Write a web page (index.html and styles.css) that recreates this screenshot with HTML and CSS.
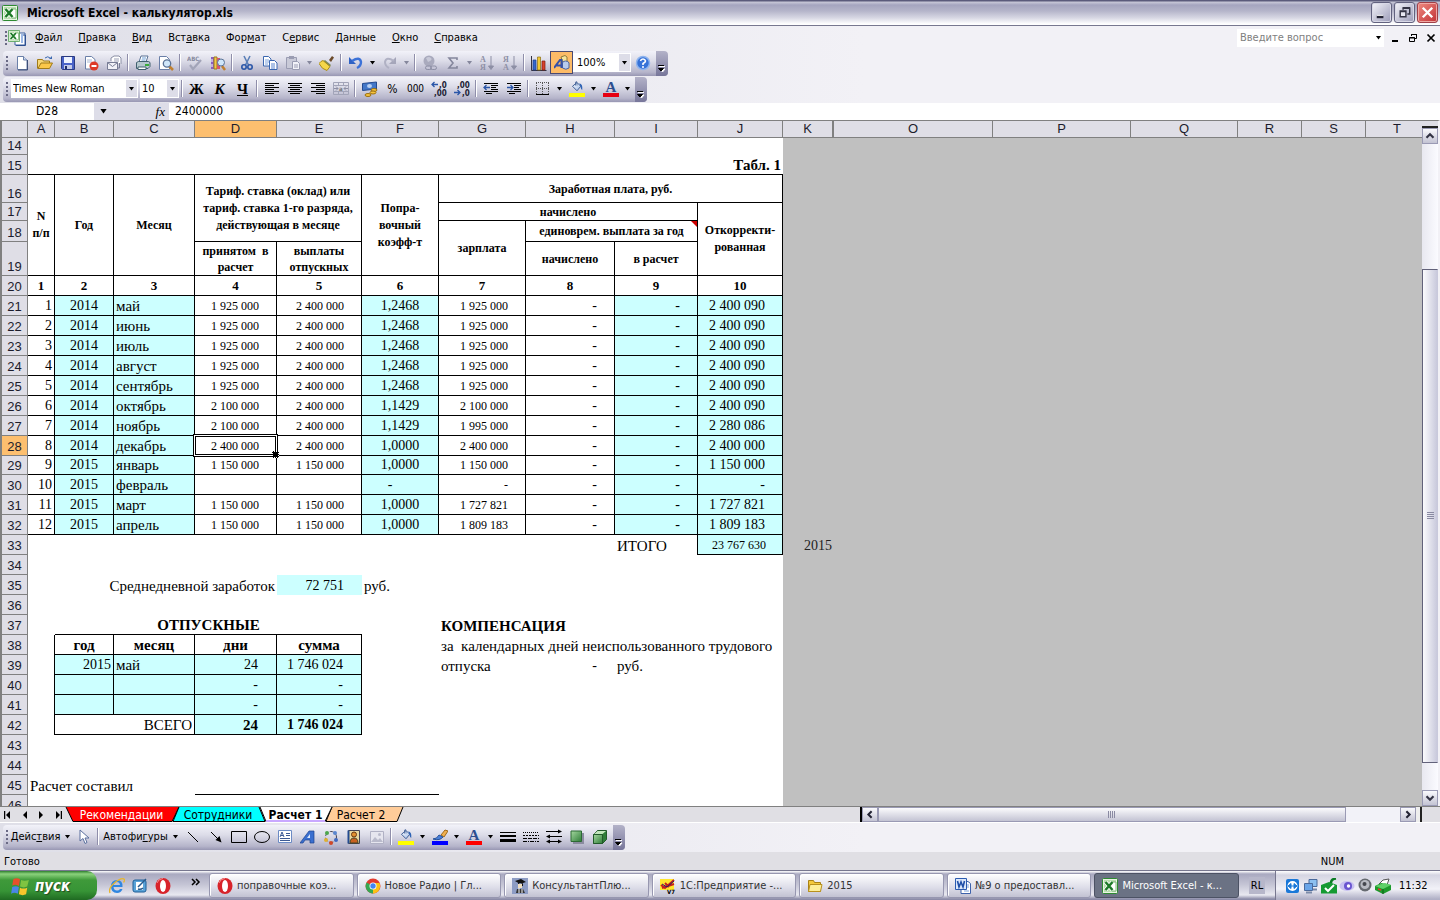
FILE: index.html
```html
<!DOCTYPE html>
<html lang="ru">
<head>
<meta charset="utf-8">
<title>Microsoft Excel - калькулятор.xls</title>
<link rel="stylesheet" href="styles.css">
</head>
<body>
<svg class="defs" aria-hidden="true">
  <defs>
    <linearGradient id="gGreen" x1="0" y1="0" x2="1" y2="1"><stop offset="0" stop-color="#a5d8a0"/><stop offset="1" stop-color="#2f7d38"/></linearGradient>
    <linearGradient id="gBlue" x1="0" y1="0" x2="1" y2="1"><stop offset="0" stop-color="#ffffff"/><stop offset="1" stop-color="#9db9e6"/></linearGradient>
  </defs>
  <symbol id="excel" viewBox="0 0 16 16"><rect x=".5" y=".5" width="15" height="15" rx="1" fill="#e9f5e4" stroke="#2e8b32"/><path d="M2 2h12v12H2z" fill="#b9dfb0"/><path d="M10 4h4v9h-4" fill="#fff" stroke="#7fb77a"/><path d="M3.500 4l7 8M10.500 4l-7 8" stroke="#fff" stroke-width="4"/><path d="M3.500 4l7 8M10.500 4l-7 8" stroke="#1d7a28" stroke-width="2.500"/></symbol>
  <symbol id="down" viewBox="0 0 7 4"><path d="M1 0h5L3.500 3.500z" fill="currentColor"/></symbol>
  <symbol id="bucket" viewBox="0 0 16 16"><path d="M2 7l6-5 5 5-5 6z" fill="url(#gBlue)" stroke="#3c5c94" stroke-width="1.300"/><path d="M6 6V1.500q2-2 2 1V6" fill="none" stroke="#3c5c94"/><path d="M11 3q5 1 4 9q-2-1-2.500-5z" fill="#2d62b5"/></symbol>
  <symbol id="opera" viewBox="0 0 16 16"><ellipse cx="8" cy="8" rx="7.500" ry="8" fill="#d8232a"/><ellipse cx="8" cy="8" rx="3" ry="6" fill="#fff"/><path d="M2 5q1-4 6-4.500" stroke="#f58a8a" fill="none"/></symbol>
  <symbol id="more" viewBox="0 0 8 9"><path d="M1 1.500h6M2 4h5L4.500 7z" stroke="#fff" fill="#fff"/><path d="M0 .5h6M.5 3.500h5L3 6z" stroke="#000" fill="#000" stroke-width="1"/></symbol>
</svg>

<header class="titlebar">
  <svg class="i16"><use href="#excel"/></svg>
  <h1>Microsoft Excel - калькулятор.xls</h1>
  <div class="winbtns">
    <button class="wb" aria-label="Свернуть"><svg viewBox="0 0 20 20"><path d="M5 14.500h7" stroke="#223" stroke-width="3"/><path d="M5 13h7" stroke="#fff"/></svg></button>
    <button class="wb" aria-label="Развернуть"><svg viewBox="0 0 20 20"><path d="M8.500 7V5.500h7v6H13M8 5h8" fill="none" stroke="#334" stroke-width="1.500"/><path d="M5.500 8.500h6v6h-6zM5 9h7" fill="#e8e8f2" stroke="#334" stroke-width="1.500"/></svg></button>
    <button class="wb close" aria-label="Закрыть"><svg viewBox="0 0 20 20"><path d="M5 5l10 10M15 5L5 15" stroke="#fff" stroke-width="2.500"/></svg></button>
  </div>
</header>

<div class="chrome">
<nav class="menubar">
  <span class="grip"></span>
  <svg class="i18" viewBox="0 0 18 16"><path d="M7 3h10v12H7z" fill="#fff" stroke="#3a5f9f"/><path d="M15 5h2.500v10.500H8" fill="none" stroke="#2d4f90"/><path d="M14 4v9" stroke="#9db9e6" stroke-width="2"/><svg width="12" height="12"><use href="#excel"/></svg></svg>
  <button><u>Ф</u>айл</button><button><u>П</u>равка</button><button><u>В</u>ид</button><button>Вст<u>а</u>вка</button><button>Фор<u>м</u>ат</button><button>С<u>е</u>рвис</button><button><u>Д</u>анные</button><button><u>О</u>кно</button><button><u>С</u>правка</button>
  <div class="ask"><input aria-label="Введите вопрос" placeholder="Введите вопрос"><svg class="dn"><use href="#down"/></svg></div>
  <div class="docbtns">
    <button aria-label="Свернуть книгу"><svg viewBox="0 0 10 10"><path d="M2 8h6" stroke="#000" stroke-width="2"/></svg></button>
    <button aria-label="Восстановить книгу"><svg viewBox="0 0 10 10"><path d="M3.500 3V1.500h5v4H7M3 1.500h6M1.500 4.500h5v4h-5zM1 5h6" fill="none" stroke="#000"/></svg></button>
    <button aria-label="Закрыть книгу"><svg viewBox="0 0 10 10"><path d="M1.500 1.500l7 7M8.500 1.500l-7 7" stroke="#000" stroke-width="1.700"/></svg></button>
  </div>
</nav>

<div class="toolbar" role="toolbar" aria-label="Стандартная">
  <span class="grip"></span>
  <button aria-label="Создать"><svg viewBox="0 0 16 16"><path d="M3.500 1.500h6l3.500 3.500v9.500H3.500z" fill="#fff" stroke="#6a7fa8"/><path d="M9.500 1.500V5H13" fill="#cfdcf2" stroke="#6a7fa8"/><path d="M13.500 5v10H4" stroke="#3d4f78" fill="none"/></svg></button>
  <button aria-label="Открыть"><svg viewBox="0 0 16 16"><path d="M.5 13.500v-9h5l1 1.500h6v2" fill="#f7d774" stroke="#a07a18"/><path d="M1 13.500L4 8h11.500l-3 5.500z" fill="#fbc84a" stroke="#a07a18"/><path d="M8 3q3-2.500 5 0" fill="none" stroke="#3a68b0"/><path d="M12 4h3V1z" fill="#3a68b0"/></svg></button>
  <button aria-label="Сохранить"><svg viewBox="0 0 16 16"><path d="M1.500 1.500h13v13h-12l-1-1z" fill="#4a63c8" stroke="#2a3a80"/><path d="M4 2h8v6H4z" fill="#eef3ff"/><path d="M4 10h8v4H4z" fill="#c5cce8"/><path d="M5 11h2v3H5z" fill="#1f2d6b"/></svg></button>
  <button aria-label="Разрешения"><svg viewBox="0 0 16 16"><path d="M2.500 1.500h6l3.500 3v9.500H2.500z" fill="#fff" stroke="#6a7fa8"/><path d="M4 5h5M4 7h5" stroke="#aab8d4"/><circle cx="11" cy="11" r="4.500" fill="#dd3a28"/><path d="M8.500 11h5" stroke="#fff" stroke-width="2"/></svg></button>
  <button aria-label="Сообщение"><svg viewBox="0 0 16 16"><path d="M5 6V3l3-2h5l2 2v6" fill="#fff" stroke="#8b8fa5"/><path d="M8 4h5M8 6h5" stroke="#9b9fb5"/><path d="M1.500 7.500h10v7h-10z" fill="#f2f2f8" stroke="#777c95"/><path d="M1.500 7.500l5 4 5-4M13.500 8v5h-2" fill="none" stroke="#777c95"/></svg></button>
  <span class="sep"></span>
  <button aria-label="Печать"><svg viewBox="0 0 16 16"><path d="M4 7l2-6h7l-2 6" fill="#fff" stroke="#5a7296"/><path d="M1.500 7.500l2-1h10l1.500 1v4l-2 2H1.500z" fill="#b6c9cf" stroke="#40606e"/><path d="M3 12h8v2.500H3z" fill="#fff" stroke="#40606e"/><path d="M10 10h4" stroke="#3aad3a" stroke-width="2"/><path d="M7 3h4M6.500 5h4" stroke="#6d9fd8"/></svg></button>
  <button aria-label="Просмотр"><svg viewBox="0 0 16 16"><path d="M1.500 1.500h7l3 3v10h-10z" fill="#fff" stroke="#6a7fa8"/><path d="M11 11l4 4" stroke="#c08030" stroke-width="2.500"/><circle cx="9" cy="8.500" r="3.700" fill="#cfe6fa" stroke="#5a7296" stroke-width="1.300"/></svg></button>
  <span class="sep"></span>
  <button aria-label="Орфография"><svg viewBox="0 0 16 16"><text x="0" y="6" class="tiny" fill="#888ba0">ABC</text><path d="M3 10l3 4 8-9" fill="none" stroke="#a2a4b8" stroke-width="2.200"/></svg></button>
  <button aria-label="Справочные материалы"><svg viewBox="0 0 16 16"><path d="M1 2h3v12H1z" fill="#8a5fc0"/><path d="M4 2h3v12H4z" fill="#f1c94a" stroke="#9b7a20"/><path d="M7 3h3v11H7z" fill="#d8576a"/><path d="M2 4v3M2 9v3" stroke="#fff"/><path d="M12 11l3 4" stroke="#c08030" stroke-width="2.500"/><circle cx="11" cy="7.500" r="3.500" fill="#cfe6fa" stroke="#5a7296"/></svg></button>
  <span class="sep"></span>
  <button aria-label="Вырезать"><svg viewBox="0 0 16 16"><path d="M5 1l4.500 9M11 1L6.500 10" stroke="#5b7fb8" stroke-width="1.600"/><circle cx="5" cy="12" r="2.200" fill="none" stroke="#2a56a8" stroke-width="1.600"/><circle cx="11" cy="12" r="2.200" fill="none" stroke="#2a56a8" stroke-width="1.600"/></svg></button>
  <button aria-label="Копировать"><svg viewBox="0 0 16 16"><path d="M1.500 1.500h5l2.500 2.500v7H1.500z" fill="#fff" stroke="#3b67b0"/><path d="M3 5h4M3 7h4M3 9h3" stroke="#7fa3dc"/><path d="M7.500 5.500h5L15 8v6.500H7.500z" fill="#fff" stroke="#3b67b0"/><path d="M9 9h4M9 11h4M9 13h4" stroke="#5a86cf"/></svg></button>
  <button aria-label="Вставить"><svg viewBox="0 0 16 16"><path d="M1.500 2.500h10v11h-10z" fill="#c9cad8" stroke="#9a9cb2"/><path d="M4 1h5v3H4z" fill="#9a9cb2"/><path d="M7.500 6.500h5l2 2v6h-7z" fill="#f2f2f8" stroke="#9a9cb2"/><path d="M9 10h4M9 12h4" stroke="#9a9cb2"/></svg></button>
  <button class="arr off" aria-label="Параметры вставки"><svg class="dn"><use href="#down"/></svg></button>
  <button aria-label="Формат по образцу"><svg viewBox="0 0 16 16"><path d="M10 5l3-4 2 1.500L12 7z" fill="#6b4a2a"/><path d="M6 5l6 5-1.500 2-7-5z" fill="#7c8a58"/><path d="M2 6.500l2-1 7 6-3 4q-5-1-8-7z" fill="#f4d64a" stroke="#a98b1c"/></svg></button>
  <span class="sep"></span>
  <button aria-label="Отменить"><svg viewBox="0 0 16 16"><path d="M1 2v7h7z" fill="#2f62c4"/><path d="M4 6q8-5 9 1q0 4-4 6" fill="none" stroke="#3c72d8" stroke-width="2.400"/></svg></button>
  <button class="arr" aria-label="Список отмены"><svg class="dn"><use href="#down"/></svg></button>
  <button aria-label="Вернуть"><svg viewBox="0 0 16 16"><path d="M14 2v7H7z" fill="#a5a6ba"/><path d="M12 6Q4 1 3 7q0 4 4 6" fill="none" stroke="#b0b1c4" stroke-width="2"/></svg></button>
  <button class="arr off" aria-label="Список возврата"><svg class="dn"><use href="#down"/></svg></button>
  <span class="sep"></span>
  <button aria-label="Гиперссылка"><svg viewBox="0 0 16 16"><circle cx="7" cy="6" r="5.500" fill="#a9aabd"/><path d="M4 3q3-2 5 0t-3 4" fill="#c8c9d8"/><rect x="3.500" y="11" width="6" height="3.500" rx="1.700" fill="none" stroke="#8d8fa5"/><rect x="8.500" y="11" width="6" height="3.500" rx="1.700" fill="none" stroke="#8d8fa5"/></svg></button>
  <button aria-label="Автосумма"><svg viewBox="0 0 16 16"><path d="M12 5V3H4l4 5-4 5h8v-2" fill="none" stroke="#84869c" stroke-width="1.600"/></svg></button>
  <button class="arr off" aria-label="Функции"><svg class="dn"><use href="#down"/></svg></button>
  <button aria-label="По возрастанию"><svg viewBox="0 0 16 16"><text x="1" y="7" class="az">А</text><text x="1" y="15" class="az">Я</text><path d="M12 1v11M9.500 11h5L12 14.500z" stroke="#8d8fa5" fill="#8d8fa5"/></svg></button>
  <button aria-label="По убыванию"><svg viewBox="0 0 16 16"><text x="1" y="7" class="az">Я</text><text x="1" y="15" class="az">А</text><path d="M12 1v11M9.500 11h5L12 14.500z" stroke="#8d8fa5" fill="#8d8fa5"/></svg></button>
  <span class="sep"></span>
  <button aria-label="Диаграмма"><svg viewBox="0 0 16 16"><path d="M.5 1v14.500h15" stroke="#334" fill="none"/><path d="M2 5h3v10H2z" fill="#3366cc" stroke="#1f3f86" stroke-width=".7"/><path d="M6.500 2h3v13h-3z" fill="#f3c934" stroke="#8a6d10" stroke-width=".7"/><path d="M11 6h3v9h-3z" fill="#d8402c" stroke="#7d1c10" stroke-width=".7"/></svg></button>
  <button class="on" aria-label="Рисование" aria-pressed="true"><svg viewBox="0 0 16 16"><path d="M7 2l4-1.500L13 2v5l-4 1z" fill="#f7e39a" stroke="#8f7b3a"/><path d="M8.500 8q0-2 3-2t3.500 2v5q-3 2.500-6.500 0z" fill="#b9cbee" stroke="#4b62a0"/><path d="M0 13L6 5h1.500v8M2 10.500h5" fill="none" stroke="#3550a8" stroke-width="2"/></svg></button>
  <div class="combo zoom"><select aria-label="Масштаб"><option>100%</option></select><svg class="dn"><use href="#down"/></svg></div>
  <button aria-label="Справка"><svg viewBox="0 0 16 16"><circle cx="8" cy="8" r="6.500" fill="#3672d8" stroke="#8fb4ee" stroke-width="1.500"/><path d="M5.500 6q.5-2 2.500-2t2.500 2q0 1.300-2.500 2.500V10" fill="none" stroke="#fff" stroke-width="1.600"/><circle cx="8" cy="12" r="1" fill="#fff"/></svg></button>
  <button class="end" aria-label="Параметры панелей"><svg viewBox="0 0 8 9"><use href="#more"/></svg></button>
</div>

<div class="toolbar" role="toolbar" aria-label="Форматирование">
  <span class="grip"></span>
  <div class="combo font"><select aria-label="Шрифт"><option>Times New Roman</option></select><svg class="dn"><use href="#down"/></svg></div>
  <div class="combo size"><select aria-label="Размер"><option>10</option></select><svg class="dn"><use href="#down"/></svg></div>
  <span class="sep"></span>
  <button class="ch">Ж</button><button class="ch it">К</button><button class="ch"><u>Ч</u></button>
  <span class="sep"></span>
  <button aria-label="По левому краю"><svg viewBox="0 0 16 16"><path d="M1 2.500h14M1 4.500h9M1 6.500h14M1 8.500h9M1 10.500h14M1 12.500h9" stroke="#000"/></svg></button>
  <button aria-label="По центру"><svg viewBox="0 0 16 16"><path d="M1 2.500h14M3 4.500h10M1 6.500h14M3 8.500h10M1 10.500h14M3 12.500h10" stroke="#000"/></svg></button>
  <button aria-label="По правому краю"><svg viewBox="0 0 16 16"><path d="M1 2.500h14M6 4.500h9M1 6.500h14M6 8.500h9M1 10.500h14M6 12.500h9" stroke="#000"/></svg></button>
  <button aria-label="Объединить"><svg viewBox="0 0 16 16"><path d="M.5 1.500h15v12H.5zM.5 4.500h15M.5 10.500h15M5.500 1.500v3M10.500 1.500v3M5.500 10.500v3M10.500 10.500v3" fill="none" stroke="#a2a4b8"/><path d="M1 7.500h4M3 5.500l2 2-2 2M15 7.500h-4M13 5.500l-2 2 2 2" fill="none" stroke="#8d8fa5"/><text x="6" y="10" class="tiny" fill="#777">a</text></svg></button>
  <span class="sep"></span>
  <button aria-label="Денежный формат"><svg viewBox="0 0 16 16"><path d="M.5 2.500l14-1.500v7l-14 1.500z" fill="#4377c8" stroke="#234a90"/><ellipse cx="7.500" cy="5" rx="2.500" ry="2" fill="#b8d0f2"/><ellipse cx="12" cy="9" rx="3" ry="1.500" fill="#f6c33c" stroke="#9b7010"/><ellipse cx="11" cy="11.500" rx="3" ry="1.500" fill="#f6c33c" stroke="#9b7010"/><ellipse cx="6" cy="14" rx="3" ry="1.500" fill="#f6c33c" stroke="#9b7010"/></svg></button>
  <button class="pc">%</button><button class="pc zeros">000</button>
  <button aria-label="Увеличить разрядность"><svg viewBox="0 0 16 16"><path d="M1 3.500h6M3.500 1L1 3.500 3.500 6" fill="none" stroke="#2a56a8" stroke-width="1.300"/><text x="8" y="7" class="dig">,0</text><text x="3" y="15" class="dig">,00</text></svg></button>
  <button aria-label="Уменьшить разрядность"><svg viewBox="0 0 16 16"><path d="M0 11.500h6M3.500 9L6 11.500 3.500 14" fill="none" stroke="#2a56a8" stroke-width="1.300"/><text x="3" y="7" class="dig">,00</text><text x="8" y="15" class="dig">,0</text></svg></button>
  <span class="sep"></span>
  <button aria-label="Уменьшить отступ"><svg viewBox="0 0 16 16"><path d="M1 2.500h14M8 4.500h7M8 6.500h5M8 8.500h7M1 10.500h14M3 12.500h6" stroke="#000"/><path d="M1 6.500h6M3.500 4L1 6.500 3.500 9" fill="none" stroke="#2a56a8" stroke-width="1.300"/></svg></button>
  <button aria-label="Увеличить отступ"><svg viewBox="0 0 16 16"><path d="M1 2.500h14M8 4.500h7M8 6.500h5M8 8.500h7M1 10.500h14M3 12.500h6" stroke="#000"/><path d="M1 6.500h6M4.500 4L7 6.500 4.500 9" fill="none" stroke="#2a56a8" stroke-width="1.300"/></svg></button>
  <span class="sep"></span>
  <button aria-label="Границы"><svg viewBox="0 0 16 16"><path d="M1.500 2v11M7.500 2v11M13.500 2v11M1 1.500h13M1 7.500h13" stroke="#555" stroke-dasharray="1 1"/><path d="M1 13.500h13" stroke="#000"/></svg></button>
  <button class="arr" aria-label="Виды границ"><svg class="dn"><use href="#down"/></svg></button>
  <button aria-label="Цвет заливки"><svg viewBox="0 0 16 16"><svg width="16" height="12"><use href="#bucket"/></svg><path d="M0 12h16v4H0z" fill="#ffff00"/></svg></button>
  <button class="arr" aria-label="Цвета заливки"><svg class="dn"><use href="#down"/></svg></button>
  <button aria-label="Цвет шрифта"><svg viewBox="0 0 16 16"><text x="8" y="11" class="bigA">A</text><path d="M0 12h16v4H0z" fill="#e60012"/></svg></button>
  <button class="arr" aria-label="Цвета шрифта"><svg class="dn"><use href="#down"/></svg></button>
  <button class="end" aria-label="Параметры панелей"><svg viewBox="0 0 8 9"><use href="#more"/></svg></button>
</div>

<div class="formula">
  <input class="namebox" aria-label="Имя" value="D28">
  <button class="namearr" aria-label="Список имён"><svg viewBox="0 0 7 4"><use href="#down"/></svg></button>
  <button class="fx" aria-label="Вставка функции"><i>fx</i></button>
  <input class="fval" aria-label="Строка формул" value="2400000">
</div>
</div>

<main class="sheetwrap">
<div class="sheet">
<table>
<colgroup><col class="w28"><col class="w27"><col class="w59"><col class="w81"><col class="w82"><col class="w85"><col class="w77"><col class="w87"><col class="w89"><col class="w83"><col class="w85"><col class="w51"><col class="w159"><col class="w138"><col class="w107"><col class="w64"><col class="w64"><col></colgroup>
<thead><tr class="hd"><th></th><th>A</th><th>B</th><th>C</th><th class="sel">D</th><th>E</th><th>F</th><th>G</th><th>H</th><th>I</th><th>J</th><th class="frz">K</th><th>O</th><th>P</th><th>Q</th><th>R</th><th>S</th><th class="last">T</th></tr></thead>
<tbody>
<tr class="h17"><th>14</th><td colspan="10"></td><td class="gray" colspan="7"></td></tr>
<tr><th>15</th><td colspan="10" class="bb r bold p2">Табл. 1</td><td class="gray" colspan="7"></td></tr>
<tr class="h28 hh"><th>16</th><td class="b" rowspan="4">N<br>п/п</td><td class="b" rowspan="4">Год</td><td class="b" rowspan="4">Месяц</td><td class="b" rowspan="3" colspan="2">Тариф. ставка (оклад) или<br>тариф. ставка 1-го разряда,<br>действующая в месяце</td><td class="b" rowspan="4">Попра-<br>вочный<br>коэфф-т</td><td class="b" colspan="4">Заработная плата, руб.</td><td class="gray" colspan="7"></td></tr>
<tr class="h18 hh"><th>17</th><td class="b" colspan="3">начислено</td><td class="b" rowspan="3">Откорректи-<br>рованная</td><td class="gray" colspan="7"></td></tr>
<tr class="h21 hh"><th>18</th><td class="b" rowspan="2">зарплата</td><td class="b note" colspan="2">единоврем. выплата за год</td><td class="gray" colspan="7"></td></tr>
<tr class="h34 hh"><th>19</th><td class="b">принятом&nbsp; в<br>расчет</td><td class="b">выплаты<br>отпускных</td><td class="b">начислено</td><td class="b">в расчет</td><td class="gray" colspan="7"></td></tr>
<tr class="hh nums"><th>20</th><td class="b">1</td><td class="b">2</td><td class="b">3</td><td class="b">4</td><td class="b">5</td><td class="b">6</td><td class="b">7</td><td class="b">8</td><td class="b">9</td><td class="b">10</td><td class="gray" colspan="7"></td></tr>
<tr class="d"><th>21</th><td>1</td><td>2014</td><td>май</td><td>1 925 000</td><td>2 400 000</td><td>1,2468</td><td>1 925 000</td><td>-</td><td>-</td><td>2 400 090</td><td class="gray" colspan="7"></td></tr>
<tr class="d"><th>22</th><td>2</td><td>2014</td><td>июнь</td><td>1 925 000</td><td>2 400 000</td><td>1,2468</td><td>1 925 000</td><td>-</td><td>-</td><td>2 400 090</td><td class="gray" colspan="7"></td></tr>
<tr class="d"><th>23</th><td>3</td><td>2014</td><td>июль</td><td>1 925 000</td><td>2 400 000</td><td>1,2468</td><td>1 925 000</td><td>-</td><td>-</td><td>2 400 090</td><td class="gray" colspan="7"></td></tr>
<tr class="d"><th>24</th><td>4</td><td>2014</td><td>август</td><td>1 925 000</td><td>2 400 000</td><td>1,2468</td><td>1 925 000</td><td>-</td><td>-</td><td>2 400 090</td><td class="gray" colspan="7"></td></tr>
<tr class="d"><th>25</th><td>5</td><td>2014</td><td>сентябрь</td><td>1 925 000</td><td>2 400 000</td><td>1,2468</td><td>1 925 000</td><td>-</td><td>-</td><td>2 400 090</td><td class="gray" colspan="7"></td></tr>
<tr class="d"><th>26</th><td>6</td><td>2014</td><td>октябрь</td><td>2 100 000</td><td>2 400 000</td><td>1,1429</td><td>2 100 000</td><td>-</td><td>-</td><td>2 400 090</td><td class="gray" colspan="7"></td></tr>
<tr class="d"><th>27</th><td>7</td><td>2014</td><td>ноябрь</td><td>2 100 000</td><td>2 400 000</td><td>1,1429</td><td>1 995 000</td><td>-</td><td>-</td><td>2 280 086</td><td class="gray" colspan="7"></td></tr>
<tr class="d"><th class="sel">28</th><td>8</td><td>2014</td><td>декабрь</td><td class="cell">2 400 000</td><td>2 400 000</td><td>1,0000</td><td>2 400 000</td><td>-</td><td>-</td><td>2 400 000</td><td class="gray" colspan="7"></td></tr>
<tr class="d h19"><th>29</th><td>9</td><td>2015</td><td>январь</td><td>1 150 000</td><td>1 150 000</td><td>1,0000</td><td>1 150 000</td><td>-</td><td>-</td><td>1 150 000</td><td class="gray" colspan="7"></td></tr>
<tr class="d"><th>30</th><td>10</td><td>2015</td><td>февраль</td><td></td><td></td><td class="dash">-</td><td>-</td><td>-</td><td>-</td><td>-</td><td class="gray" colspan="7"></td></tr>
<tr class="d"><th>31</th><td>11</td><td>2015</td><td>март</td><td>1 150 000</td><td>1 150 000</td><td>1,0000</td><td>1 727 821</td><td>-</td><td>-</td><td>1 727 821</td><td class="gray" colspan="7"></td></tr>
<tr class="d"><th>32</th><td>12</td><td>2015</td><td>апрель</td><td>1 150 000</td><td>1 150 000</td><td>1,0000</td><td>1 809 183</td><td>-</td><td>-</td><td>1 809 183</td><td class="gray" colspan="7"></td></tr>
<tr><th>33</th><td colspan="8"></td><td class="br p2 tx">ИТОГО</td><td class="b cy r p16 sm">23 767 630</td><td class="gray r p2">2015</td><td class="gray" colspan="6"></td></tr>
<tr><th>34</th><td colspan="10"></td><td class="gray" colspan="7"></td></tr>
<tr><th>35</th><td colspan="4" class="r p2 tx">Среднедневной заработок</td><td class="cy r p18">72 751</td><td class="p2 tx">руб.</td><td colspan="4"></td><td class="gray" colspan="7"></td></tr>
<tr><th>36</th><td colspan="10"></td><td class="gray" colspan="7"></td></tr>
<tr><th>37</th><td></td><td colspan="4" class="bb c bold">ОТПУСКНЫЕ</td><td></td><td colspan="4" class="bold p2">КОМПЕНСАЦИЯ</td><td class="gray" colspan="7"></td></tr>
<tr><th>38</th><td class="br"></td><td class="b c bold">год</td><td class="b c bold">месяц</td><td class="b c bold">дни</td><td class="b c bold">сумма</td><td></td><td colspan="4" class="p2 tx">за&nbsp; календарных дней неиспользованного трудового</td><td class="gray" colspan="7"></td></tr>
<tr><th>39</th><td class="br"></td><td class="b cy r p2">2015</td><td class="b cy p2 tx">май</td><td class="b cy r p18">24</td><td class="b cy r p18">1 746 024</td><td></td><td class="p2 tx">отпуска</td><td class="r p18">-</td><td colspan="2" class="p2 tx">руб.</td><td class="gray" colspan="7"></td></tr>
<tr><th>40</th><td class="br"></td><td class="b cy"></td><td class="b cy"></td><td class="b cy r p18">-</td><td class="b cy r p18">-</td><td colspan="5"></td><td class="gray" colspan="7"></td></tr>
<tr><th>41</th><td class="br"></td><td class="b cy"></td><td class="b cy"></td><td class="b cy r p18">-</td><td class="b cy r p18">-</td><td colspan="5"></td><td class="gray" colspan="7"></td></tr>
<tr><th>42</th><td class="br"></td><td class="b r p2 tx" colspan="2">ВСЕГО</td><td class="b cy r p18 bold">24</td><td class="b cy r p18 bold num">1 746 024</td><td colspan="5"></td><td class="gray" colspan="7"></td></tr>
<tr><th>43</th><td colspan="10"></td><td class="gray" colspan="7"></td></tr>
<tr><th>44</th><td colspan="10"></td><td class="gray" colspan="7"></td></tr>
<tr><th>45</th><td colspan="3" class="p2 tx">Расчет составил</td><td colspan="3" class="bb"></td><td colspan="4"></td><td class="gray" colspan="7"></td></tr>
<tr><th>46</th><td colspan="10"></td><td class="gray" colspan="7"></td></tr>
</tbody>
</table>
</div>
<div class="vscroll">
  <span class="split"></span>
  <button class="sb" aria-label="Вверх"><svg viewBox="0 0 16 16"><path d="M4 10l4-4 4 4" fill="none" stroke="#334" stroke-width="2.500"/></svg></button>
  <div class="vtrack"><div class="vthumb"><span class="vgrip"></span></div></div>
  <button class="sb" aria-label="Вниз"><svg viewBox="0 0 16 16"><path d="M4 6l4 4 4-4" fill="none" stroke="#334" stroke-width="2.500"/></svg></button>
</div>
</main>

<div class="tabrow">
  <div class="tabnav">
    <button aria-label="Первый лист"><svg viewBox="0 0 8 8"><path d="M.5 0v8" stroke="#000" stroke-width="1.500"/><path d="M6 0v8L2 4z"/></svg></button>
    <button aria-label="Предыдущий лист"><svg viewBox="0 0 8 8"><path d="M6 0v8L2 4z"/></svg></button>
    <button aria-label="Следующий лист"><svg viewBox="0 0 8 8"><path d="M2 0v8l4-4z"/></svg></button>
    <button aria-label="Последний лист"><svg viewBox="0 0 8 8"><path d="M7.500 0v8" stroke="#000" stroke-width="1.500"/><path d="M2 0v8l4-4z"/></svg></button>
  </div>
  <div class="tabs">
    <button class="tab t1"><svg viewBox="0 0 113 15"><path d="M0 0L7 14.500H106L113 0" fill="#ff0000" stroke="#000"/></svg><span>Рекомендации</span></button>
    <button class="tab t2"><svg viewBox="0 0 92 15"><path d="M6 0L0 14.500H92L86 0" fill="#00ffff" stroke="#000"/></svg><span>Сотрудники</span></button>
    <button class="tab t3"><svg viewBox="0 0 72 15"><path d="M0 0L6 14.500H65L72 0" fill="#fff" stroke="#000"/><path d="M6 14h59" stroke="#c9a8ff" stroke-width="2"/></svg><span>Расчет 1</span></button>
    <button class="tab t4"><svg viewBox="0 0 76 15"><path d="M5 0L-1 14.500H70L76 0" fill="#ffcc99" stroke="#000"/></svg><span>Расчет 2</span></button>
  </div>
  <div class="hscroll">
    <span class="hsplit"></span>
    <button class="sb" aria-label="Влево"><svg viewBox="0 0 16 16"><path d="M10 4L6 8l4 4" fill="none" stroke="#223" stroke-width="2.500"/></svg></button>
    <div class="htrack"><div class="hthumb"><span class="hgrip"></span></div></div>
    <button class="sb" aria-label="Вправо"><svg viewBox="0 0 16 16"><path d="M6 4l4 4-4 4" fill="none" stroke="#223" stroke-width="2.500"/></svg></button>
    <span class="hend"></span>
  </div>
</div>

<div class="drawrow">
<div class="toolbar" role="toolbar" aria-label="Рисование">
  <span class="grip"></span>
  <button class="txt act"><span>Дейс<u>т</u>вия</span><svg class="dn"><use href="#down"/></svg></button>
  <button aria-label="Выбор объектов"><svg viewBox="0 0 16 16"><path d="M4 1v11l3-2.500 2 5 2-1-2-4.500h4z" fill="#fff" stroke="#5a6f9e"/></svg></button>
  <span class="sep"></span>
  <button class="txt auto"><span>Автофи<u>г</u>уры</span><svg class="dn"><use href="#down"/></svg></button>
  <button aria-label="Линия"><svg viewBox="0 0 16 16"><path d="M3 3l10 10" stroke="#000"/></svg></button>
  <button aria-label="Стрелка"><svg viewBox="0 0 16 16"><path d="M3 3l7 7" stroke="#000"/><path d="M13.500 13.500L7.500 11l4-4z"/></svg></button>
  <button aria-label="Прямоугольник"><svg viewBox="0 0 16 16"><path d="M.5 2.500h15v11H.5z" fill="none" stroke="#000"/></svg></button>
  <button aria-label="Овал"><svg viewBox="0 0 16 16"><ellipse cx="8" cy="8" rx="7.500" ry="5.500" fill="none" stroke="#000"/></svg></button>
  <button aria-label="Надпись"><svg viewBox="0 0 16 16"><path d="M1.500 1.500h13v12h-13z" fill="#fff" stroke="#6b8ac4"/><path d="M3 8l2-5 2 5M4 6.500h2M9 4.500h4M9 6.500h4M3 9.500h10M3 11.500h10" fill="none" stroke="#3d5a94"/></svg></button>
  <button aria-label="WordArt"><svg viewBox="0 0 16 16"><path d="M0 14L9 2h5v12h-4v-3H5l-2 3z" fill="#3a6fd0" stroke="#1d428c" stroke-width=".7"/><path d="M7 9h3V5z" fill="#dce8fb"/></svg></button>
  <button aria-label="Диаграмма"><svg viewBox="0 0 16 16"><circle cx="8" cy="8" r="5.500" fill="none" stroke="#445" stroke-dasharray="4 2"/><circle cx="4" cy="4" r="2" fill="#4ca64c"/><circle cx="12" cy="4" r="2" fill="#5a86cf"/><circle cx="3" cy="11" r="2" fill="#e0b030"/><circle cx="13" cy="11" r="2" fill="#4068c0"/><circle cx="8" cy="14" r="2" fill="#d04828"/></svg></button>
  <button aria-label="Картинка"><svg viewBox="0 0 16 16"><path d="M2.500 1.500h11v13h-11z" fill="#e8d9a0" stroke="#445"/><circle cx="8" cy="5.500" r="2.500" fill="#e09030" stroke="#6b3a10"/><path d="M4 14q0-5 4-5t4 5z" fill="#c86020" stroke="#442"/><path d="M2.500 1.500v13" stroke="#234a90" stroke-width="2"/></svg></button>
  <button aria-label="Рисунок"><svg viewBox="0 0 16 16"><path d="M1.500 2.500h13v12h-13z" fill="#e6e6ef" stroke="#b0b1c4"/><path d="M2 13l4-5 3 3 2-2 3 4z" fill="#b9bacb"/><circle cx="10.500" cy="5.500" r="1.500" fill="#b9bacb"/></svg></button>
  <span class="sep"></span>
  <button aria-label="Цвет заливки"><svg viewBox="0 0 16 16"><svg width="16" height="12"><use href="#bucket"/></svg><path d="M0 12h16v4H0z" fill="#ffff00"/></svg></button>
  <button class="arr" aria-label="Цвета заливки"><svg class="dn"><use href="#down"/></svg></button>
  <button aria-label="Цвет линий"><svg viewBox="0 0 16 16"><path d="M9 6l4-5 3 1-4 6z" fill="#f0b050" stroke="#a06a18"/><path d="M1 10q4 0 6-4l4 2q-3 4-10 2z" fill="#4a80d8" stroke="#24519c"/><path d="M0 12h16v4H0z" fill="#0000ff"/></svg></button>
  <button class="arr" aria-label="Цвета линий"><svg class="dn"><use href="#down"/></svg></button>
  <button aria-label="Цвет шрифта"><svg viewBox="0 0 16 16"><text x="8" y="11" class="bigA">A</text><path d="M0 12h16v4H0z" fill="#ff0000"/></svg></button>
  <button class="arr" aria-label="Цвета шрифта"><svg class="dn"><use href="#down"/></svg></button>
  <button aria-label="Тип линии"><svg viewBox="0 0 16 16"><path d="M0 3.500h16" stroke="#000"/><path d="M0 7h16" stroke="#000" stroke-width="2"/><path d="M0 11.500h16" stroke="#000" stroke-width="3"/></svg></button>
  <button aria-label="Тип штриха"><svg viewBox="0 0 16 16"><path d="M0 3.500h16" stroke="#000" stroke-dasharray="1 1"/><path d="M0 6.500h16" stroke="#000" stroke-dasharray="2 1"/><path d="M0 9.500h16" stroke="#000" stroke-dasharray="4 1"/><path d="M0 12.500h16" stroke="#000" stroke-dasharray="4 1 1 1"/></svg></button>
  <button aria-label="Вид стрелки"><svg viewBox="0 0 16 16"><path d="M0 2.500h13M3 7.500h13M2 12.500h12" stroke="#000"/><path d="M12 .5l4 2-4 2zM4 5.500L0 7.500l4 2zM4 10.500l-4 2 4 2zM12 10.500l4 2-4 2z"/></svg></button>
  <button aria-label="Тень"><svg viewBox="0 0 16 16"><path d="M4 4h11v11H4z" fill="#8b8ba0"/><path d="M2 2h10.500v10.500H2z" fill="url(#gGreen)" stroke="#2c6a34"/></svg></button>
  <button aria-label="Объём"><svg viewBox="0 0 16 16"><path d="M1.500 5.500l4-4h9v9l-4 4h-9z" fill="#2f7d38" stroke="#225a2a"/><path d="M1.500 5.500h9v9h-9z" fill="url(#gGreen)" stroke="#225a2a"/><path d="M2 5l3.500-3h8.500l-3.500 3z" fill="#c2e6bc"/></svg></button>
  <button class="end" aria-label="Параметры панелей"><svg viewBox="0 0 8 9"><use href="#more"/></svg></button>
</div>
</div>

<div class="status"><span>Готово</span><span>NUM</span></div>

<footer class="taskbar">
  <button class="start"><svg viewBox="0 0 18 18"><path d="M3 3q3-2 6 0L8 9Q5 7 2 8.500z" fill="#e8502c"/><path d="M10 3.500q3 1.500 7 0L15.500 9.500q-3 1.500-6.500 0z" fill="#7fc441"/><path d="M2 10q3-1.500 6 0l-1 6q-3-2-6 0z" fill="#4a86e8"/><path d="M9 10.500q3 1.500 6.500 0l-1 6q-3 1.500-6.500 0z" fill="#f9c52c"/></svg><span>пуск</span></button>
  <div class="quick">
    <button aria-label="Internet Explorer"><svg viewBox="0 0 16 16"><path d="M13.500 9H4.500q.5 3.500 3.500 3.500 2 0 3-1.500h2.500q-1.500 4-5.500 4-6 0-6-6.500T8 2q6 0 5.500 7zM4.500 7H11q-.5-3-3-3T4.500 7z" fill="#2f86e0"/><path d="M1 15Q-1 10 6 4.500T15.500 1.500q.5 1-1 3" fill="none" stroke="#e8b62c" stroke-width="1.300"/></svg></button>
    <button aria-label="Показать рабочий стол"><svg viewBox="0 0 16 16"><rect x="1" y="2" width="13" height="12" rx="2" fill="#5aa3d8" stroke="#1f5f98"/><path d="M4 4h7v8H4z" fill="#fff"/><path d="M6 9l8-8M6 11q3 1 5-1" stroke="#285a8c" stroke-width="1.500" fill="none"/></svg></button>
    <button aria-label="Opera"><svg class="i16"><use href="#opera"/></svg></button>
    <button class="chev" aria-label="Ещё"><svg viewBox="0 0 10 8"><path d="M1 1l3 3-3 3M5 1l3 3-3 3" fill="none" stroke="#000" stroke-width="1.500"/></svg></button>
  </div>
  <div class="tasks">
    <button><svg class="i16"><use href="#opera"/></svg><span>поправочные коэ...</span></button>
    <button><svg class="i16" viewBox="0 0 16 16"><circle cx="8" cy="8" r="7.500" fill="#e33b2e"/><path d="M1.500 4.500A7.500 7.500 0 0 0 8 15.500L11 9.500z" fill="#35a853"/><path d="M8 15.500A7.500 7.500 0 0 0 14.500 5H8z" fill="#fbc116"/><circle cx="8" cy="8" r="3.500" fill="#fff"/><circle cx="8" cy="8" r="2.700" fill="#4285f4"/></svg><span>Новое Радио | Гл...</span></button>
    <button><svg class="i16" viewBox="0 0 16 16"><path d="M0 0h16v16H0z" fill="#8d9cc4"/><path d="M3 3l6-2 5 3-6 2zM6 5v3h5V5" fill="#111"/><path d="M6 6h4v4H6z" fill="#f0dfc0"/><path d="M4 15l1-4h6l2 4z" fill="#333"/><path d="M7 10v5M10 11v4" stroke="#fff"/></svg><span>КонсультантПлю...</span></button>
    <button><svg class="i16" viewBox="0 0 16 16"><path d="M0 1h14v11H0z" fill="#ffe62c"/><path d="M1 7l4 3 9-8M2 10l12-4M5 5l4 4" stroke="#c41e1e" stroke-width="2" fill="none"/><path d="M2 6l5 3 7-6" stroke="#226" fill="none"/><text x="7" y="16" class="tiny" fill="#000">V7</text></svg><span>1С:Предприятие -...</span></button>
    <button><svg class="i16" viewBox="0 0 16 16"><path d="M1.500 13.500v-11h5l1 2h6v9z" fill="#f4c93c" stroke="#a98215"/><path d="M1.500 13.500l1.500-7h12l-1.500 7z" fill="#fdee98" stroke="#b8901c"/></svg><span>2015</span></button>
    <button><svg class="i16" viewBox="0 0 16 16"><path d="M6 3.500h7l2.500 2v10H6z" fill="#fff" stroke="#3d62ab"/><path d="M12 7h2M12 9h2M9 13h5" stroke="#7fa3dc"/><path d="M.5.500h11v11H.5z" fill="#dce8fb" stroke="#2b5bb0"/><path d="M2.500 3l1.500 6 2-5 2 5 1.500-6" fill="none" stroke="#1f4fa8" stroke-width="1.600"/></svg><span>№9 о предоставл...</span></button>
    <button class="cur"><svg class="i16"><use href="#excel"/></svg><span>Microsoft Excel - к...</span></button>
  </div>
  <span class="lang"><b>RL</b></span>
  <div class="tray">
    <svg viewBox="0 0 16 16"><rect x="1" y="1" width="13" height="14" rx="2" fill="#1a78d8"/><circle cx="7.500" cy="8" r="5" fill="#fff"/><path d="M3 8l3-2.500v5zM12 8L9 5.500v5zM5 8h5" fill="#1a78d8" stroke="#1a78d8"/></svg>
    <svg viewBox="0 0 16 16"><path d="M6 1.500h8v7H6z" fill="#8cc0f0" stroke="#4a6a9c"/><path d="M1.500 5.500h8v7h-8z" fill="#6aa5e8" stroke="#4a6a9c"/><path d="M3 14.500h6M10 11.500h4" stroke="#7b8aa8" stroke-width="2"/></svg>
    <svg viewBox="0 0 16 16"><path d="M0 7l8-3 8 3v8.500H0z" fill="#159a32"/><path d="M10 5q0-4 5-4.500" fill="none" stroke="#0c7c24" stroke-width="2.500"/><path d="M4 10l3 3 6-6" fill="none" stroke="#fff" stroke-width="2"/></svg>
    <svg viewBox="0 0 16 16"><ellipse cx="8" cy="8" rx="7.500" ry="5" fill="#c8c2f0"/><circle cx="9" cy="8" r="4" fill="#6a55d0"/><circle cx="9.500" cy="8" r="1.700" fill="#fff"/></svg>
    <svg viewBox="0 0 16 16"><circle cx="8" cy="7" r="6.500" fill="#666a70"/><circle cx="8" cy="6.500" r="4.500" fill="#b8bbc2"/><circle cx="7.500" cy="6" r="2" fill="#44474d"/></svg>
    <svg class="last" viewBox="0 0 16 16"><path d="M4 6l4-4 6-1-2 6" fill="#fff" stroke="#555"/><path d="M0 8l6-3 10 2v5l-8 4-8-4z" fill="#1d9a2c"/><path d="M0 8l8 3 8-4-6-2z" fill="#5fd068"/><path d="M8 11v5" stroke="#0c5c18"/><path d="M3 11l3 1" stroke="#e83030" stroke-width="1.500"/></svg>
    <time>11:32</time>
  </div>
</footer>
</body>
</html>
```
FILE: styles.css
```css
* { box-sizing: border-box; }
body {
  margin: 0;
  height: 100vh;
  display: flex;
  flex-direction: column;
  overflow: hidden;
  background: #e0dfe8;
  font: 11px/14px "DejaVu Sans Condensed", "Noto Sans", sans-serif;
  color: #000;
}
button, input, select {
  font: inherit;
  color: inherit;
  margin: 0;
  padding: 0;
  border: 0;
  border-radius: 0;
  background: none;
  outline: 0;
}
svg { display: block; flex: none; }
.defs { position: absolute; width: 0; height: 0; }
.i16 { width: 16px; height: 16px; }
.i18 { width: 18px; height: 16px; }
.dn { width: 7px; height: 4px; }

/* Title bar */
.titlebar {
  flex: none;
  height: 26px;
  display: flex;
  align-items: center;
  padding: 0 2px;
  border-bottom: 1px solid #77778f;
  background: linear-gradient(#5b5b7b 0, #5b5b7b 1px, #c8c8d8 2px, #a5a5bf 5px, #b5b5ca 11px, #d8d8e4 18px, #fff 24px);
}
.titlebar h1 {
  flex: 1;
  margin: 0 0 0 9px;
  font: bold 12px/16px "DejaVu Sans Condensed", "Noto Sans", sans-serif;
}
.winbtns { display: flex; gap: 2px; }
.wb {
  width: 21px;
  height: 21px;
  border: 1px solid #62627f;
  border-radius: 3px;
  background: linear-gradient(135deg, #f4f4fa, #9b9bb8);
  box-shadow: inset 0 0 0 1px #d8d8e6;
}
.wb.close {
  background: linear-gradient(135deg, #ee8a80, #c23236);
  border-color: #a04048;
  box-shadow: inset 0 0 0 1px #f0a8a4;
}

/* Menus and toolbars */
.chrome { flex: none; background: linear-gradient(90deg, #dfdfe8, #f2f1f6 60%); }
.menubar { height: 25px; display: flex; align-items: center; padding: 0 4px 2px 0; }
.menubar > button { padding: 0 8px; height: 19px; }
.menubar > .i18 { margin-left: -2px; margin-right: 1px; }
.grip {
  flex: none;
  width: 10px;
  height: 14px;
  background: repeating-linear-gradient(#6a6a85 0 2px, transparent 2px 4px) 5px 0 / 2px 14px no-repeat;
}
.ask {
  margin-left: auto;
  width: 147px;
  height: 18px;
  display: flex;
  align-items: center;
  background: #fff;
  padding-right: 2px;
}
.ask input { flex: 1; min-width: 0; padding-left: 3px; }
.ask input::placeholder { color: #808080; opacity: 1; }
.docbtns { display: flex; gap: 8px; margin-left: 6px; }
.docbtns svg { width: 10px; height: 10px; }
.toolbar {
  display: flex;
  width: max-content;
  height: 25px;
  margin: 0 0 1px 3px;
  padding-bottom: 2px;
  align-items: center;
  border-radius: 4px;
  background: linear-gradient(#f2f2f9 0, #dcdce8 40%, #b5b4ca 85%, #9897b3 100%);
}
.toolbar .grip { width: 7px; background-position: 3px 0; }
.toolbar > button {
  width: 23px;
  height: 23px;
  display: flex;
  align-items: center;
  justify-content: center;
}
.toolbar > button > svg { width: 16px; height: 16px; }
.toolbar > button > svg.dn { width: 7px; height: 4px; }
.toolbar > button.arr { width: 11px; }
.toolbar > button.off { color: #85879c; }
.toolbar > button.on { background: #fdbb67; border: 1px solid #4a4a72; }
.toolbar > button.end {
  width: 12px;
  height: 25px;
  margin: 0 0 -2px 2px;
  align-items: flex-end;
  padding-bottom: 2px;
  background: linear-gradient(#b3b2c8, #77769a);
  border-radius: 0 4px 4px 0;
}
.toolbar > button.end svg { width: 8px; height: 9px; }
.toolbar > button.ch { font: bold 15px/18px "Liberation Serif", serif; }
.toolbar > button.it { font-style: italic; }
.toolbar > button.pc { font-size: 12px; }
.toolbar > button.zeros { font-size: 10px; }
.sep { width: 2px; height: 17px; margin: 0 2px; background: linear-gradient(90deg, #8f8eaa 50%, #fff 50%); }
.tiny { font: bold 6px "DejaVu Sans Condensed", sans-serif; }
.az { font: bold 8px "Liberation Serif", serif; fill: #8d8fa5; }
.dig { font: bold 8px "DejaVu Sans Condensed", sans-serif; fill: #223; }
.bigA { font: bold 15px "Liberation Serif", serif; fill: #2d4f90; text-anchor: middle; }
.combo { height: 19px; display: flex; align-items: center; background: #fff; position: relative; }
.combo select { appearance: none; width: 100%; height: 19px; padding-left: 2px; }
.combo .dn {
  position: absolute;
  right: 1px;
  top: 1px;
  width: 11px;
  height: 17px;
  padding: 7px 2px 6px;
  background: #dddde8;
}
.combo.font { width: 127px; margin-left: 1px; }
.combo.size { width: 39px; margin-left: 2px; }
.combo.zoom { width: 58px; }
.combo.zoom select { padding-left: 4px; }

.formula { display: flex; height: 17px; font: 12px/16px "DejaVu Sans Condensed", "Noto Sans", sans-serif; background: #dddde8; }
.namebox { width: 94px; padding-bottom: 1px; text-align: center; background: #fff; }
.namearr { width: 18px; display: flex; align-items: center; justify-content: center; }
.namearr svg { width: 9px; height: 5px; }
.fx { width: 57px; text-align: right; padding-right: 4px; font: italic 13px/16px "Liberation Serif", serif; }
.fval { flex: 1; min-width: 0; background: #fff; padding: 0 0 1px 6px; }

/* Worksheet */
.sheetwrap { flex: 1 1 0; min-height: 0; display: flex; border-top: 1px solid #808080; border-right: 2px solid #f2f1f6; }
.sheet { flex: 1; min-width: 0; overflow: hidden; background: #c0c0c0; }
table {
  table-layout: fixed;
  width: 100%;
  border-collapse: separate;
  border-spacing: 0;
  font: 14px/16px "Liberation Serif", serif;
}
.w27 { width: 27px; } .w28 { width: 28px; } .w51 { width: 51px; } .w59 { width: 59px; }
.w64 { width: 64px; } .w77 { width: 77px; } .w81 { width: 81px; } .w82 { width: 82px; }
.w83 { width: 83px; } .w85 { width: 85px; } .w87 { width: 87px; } .w89 { width: 89px; }
.w107 { width: 107px; } .w138 { width: 138px; } .w159 { width: 159px; }
tr { height: 20px; }
.h17, .hd { height: 17px; }
.h18 { height: 18px; }
.h19 { height: 19px; }
.h21 { height: 21px; }
.h28 { height: 28px; }
.h34 { height: 34px; }
th {
  padding: 0 0 1px;
  font: 13px/15px "Liberation Sans", sans-serif;
  color: #1c1c2c;
  background: #dfdee6;
  border-right: 1px solid #808080;
  border-bottom: 1px solid #808080;
  vertical-align: bottom;
}
th:first-child { border-left: 2px solid #808080; }
th.sel { background: #fdbf6f; }
th.frz { border-right-width: 2px; }
th.last { border-right: 0; padding-left: 6px; }
td { padding: 0 0 1px; background: #fff; white-space: nowrap; vertical-align: bottom; }
td.gray { background: #c0c0c0; color: #222; }
.b { border-right: 1px solid #000; border-bottom: 1px solid #000; }
.bb { border-bottom: 1px solid #000; }
.br { border-right: 1px solid #000; }
.bold { font-weight: bold; font-size: 15px; }
.bold.num { font-size: 14px; }
.r { text-align: right; }
.c { text-align: center; }
.p2 { padding-left: 2px; padding-right: 2px; }
.p16 { padding-right: 16px; }
.p18 { padding-right: 18px; }
.sm { font-size: 12px; }
.tx { font-size: 15px; }
.cy { background: #ccffff; }
.hh td { font-size: 12px; font-weight: bold; text-align: center; vertical-align: middle; padding: 0; }
.hh td[rowspan] { line-height: 17px; }
.nums td { font-size: 13px; }
.d td:not(.gray) { border-right: 1px solid #000; border-bottom: 1px solid #000; text-align: right; padding-right: 17px; }
.d td:not(.gray):nth-child(2) { padding-right: 2px; }
.d td:not(.gray):nth-child(3), .d td:not(.gray):nth-child(7) { text-align: center; padding-right: 0; }
.d td:not(.gray):nth-child(4) { text-align: left; padding-left: 2px; padding-right: 0; font-size: 15px; }
.d td:nth-child(5), .d td:nth-child(6), .d td:nth-child(8) { font-size: 12px; }
.d td.dash:nth-child(7):not(.gray) { padding-right: 20px; }
.d td:nth-child(3), .d td:nth-child(4), .d td:nth-child(7), .d td:nth-child(10), .d td:nth-child(11) { background: #ccffff; }
.cell { position: relative; }
.cell::after {
  content: "";
  position: absolute;
  inset: 0;
  border: 1px solid #000;
  box-shadow: 0 0 0 1px #fff, 0 0 0 2px #000;
}
.cell::before {
  content: "";
  position: absolute;
  z-index: 1;
  right: -3px;
  bottom: -3px;
  width: 5px;
  height: 5px;
  background: #000;
  border: 1px dotted #fff;
}
.note { position: relative; }
.note::after {
  content: "";
  position: absolute;
  top: 0;
  right: 0;
  border: 3px solid #d00000;
  border-left-color: transparent;
  border-bottom-color: transparent;
}

/* Scroll bars */
.vscroll { width: 16px; display: flex; flex-direction: column; background: #eeeef6; }
.split { height: 7px; background: #dfdee6; border-bottom: 2px solid #222; }
.sb {
  flex: none;
  width: 16px;
  height: 16px;
  border: 1px solid #9a9ab4;
  background: linear-gradient(#fafafd, #c3c3d3);
}
.sb svg { width: 14px; height: 14px; }
.vtrack { flex: 1; padding: 125px 0 27px; background: linear-gradient(90deg, #e8e8f0, #fbfbff); }
.vthumb {
  height: 100%;
  display: flex;
  align-items: center;
  justify-content: center;
  border: 1px solid #62627a;
  border-right-color: #c9c9dc;
  background: linear-gradient(90deg, #fbfbfd, #c9c9dc);
}
.vgrip { width: 7px; height: 8px; background: repeating-linear-gradient(#8a8aa2 0 1px, transparent 1px 2px); }
.tabrow { flex: none; height: 16px; display: flex; background: #e0dfe4; border-top: 1px solid #808080; }
.tabrow .sb { height: 15px; }
.tabrow .sb svg { height: 13px; }
.tabnav { display: flex; width: 66px; }
.tabnav button { flex: 1; display: flex; align-items: center; justify-content: center; }
.tabnav svg { width: 8px; height: 8px; }
.tabs { display: flex; font-size: 12px; }
.tab { position: relative; height: 15px; text-align: center; }
.tab svg { position: absolute; left: 0; top: 0; height: 15px; overflow: visible; }
.tab span { position: relative; }
.t1 { width: 107px; padding-left: 4px; color: #fff; }
.t1 svg { width: 113px; }
.t2 { width: 87px; padding-left: 3px; }
.t2 svg { width: 92px; }
.t3 { width: 67px; padding-left: 4px; font-weight: bold; z-index: 1; }
.t3 svg { width: 72px; }
.t4 { width: 76px; padding-right: 8px; }
.t4 svg { width: 76px; }
.hscroll { width: 581px; margin-left: auto; display: flex; }
.hsplit { width: 3px; border-right: 2px solid #000; }
.htrack { flex: 1; padding-right: 54px; background: #f2f2f8; }
.hthumb {
  height: 15px;
  display: flex;
  align-items: center;
  justify-content: center;
  border: 1px solid #9a9ab4;
  background: linear-gradient(#fbfbfd, #c3c3d3);
}
.hgrip { width: 8px; height: 7px; background: repeating-linear-gradient(90deg, #8a8aa2 0 1px, transparent 1px 2px); }
.hend { width: 24px; border-left: 4px solid #eee; box-shadow: inset 2px 0 #222; }

.drawrow { flex: none; padding: 2px 0 1px; border-top: 1px solid #fff; background: linear-gradient(90deg, #dfdfe8, #f2f1f6 60%); }
.toolbar > button.txt { gap: 4px; white-space: nowrap; }
.toolbar > button.act { width: 62px; }
.toolbar > button.auto { width: 80px; }
.status { flex: none; height: 18px; padding: 3px 96px 1px 4px; display: flex; justify-content: space-between; background: #e0dfe4; }

/* Taskbar */
.taskbar {
  flex: none;
  height: 30px;
  display: flex;
  align-items: center;
  border-top: 1px solid #77778f;
  background: linear-gradient(#fff 0, #a9a9c0 3px, #c6c6d6 14px, #e8e8f0 24px, #8c8ca8 28px);
}
.start {
  width: 97px;
  height: 29px;
  display: flex;
  align-items: center;
  gap: 5px;
  padding-left: 10px;
  border-radius: 0 10px 10px 0;
  color: #fff;
  font: italic bold 15px/20px "DejaVu Sans Condensed", "Noto Sans", sans-serif;
  text-shadow: 1px 1px 1px #234a20;
  background: linear-gradient(#2f7f2f 0, #8bd27c 3px, #3f9a3a 9px, #379436 20px, #1f6a22 29px);
}
.start svg { width: 20px; height: 20px; }
.quick { width: 112px; display: flex; align-items: center; padding-left: 12px; gap: 7px; }
.quick svg { width: 16px; height: 16px; }
.quick .chev { align-self: flex-start; margin-left: 13px; }
.quick .chev svg { width: 10px; height: 8px; }
.tasks { flex: 1; min-width: 0; display: flex; gap: 3px; }
.tasks button {
  flex: 1 1 0;
  min-width: 0;
  height: 25px;
  display: flex;
  align-items: center;
  gap: 4px;
  padding-left: 7px;
  border: 1px solid #9797b0;
  border-radius: 3px;
  color: #333;
  white-space: nowrap;
  background: linear-gradient(#fff, #dcdce8 60%, #c2c2d2);
  box-shadow: inset 1px 1px #fff;
}
.tasks .cur { color: #fff; background: #6b7284; border-color: #4c5264; box-shadow: none; }
.lang { width: 36px; text-align: center; }
.lang b { font-weight: normal; background: #b7b7ca; padding: 2px; }
.tray {
  width: 165px;
  height: 29px;
  display: flex;
  align-items: center;
  gap: 2px;
  padding-left: 9px;
  border-left: 1px solid #77778f;
  background: linear-gradient(#fff 0, #d5d5e2 4px, #f2f2f8 18px, #b0b0c6 28px);
}
.tray svg { width: 16px; height: 16px; }
.tray time { margin-left: 6px; }
```
